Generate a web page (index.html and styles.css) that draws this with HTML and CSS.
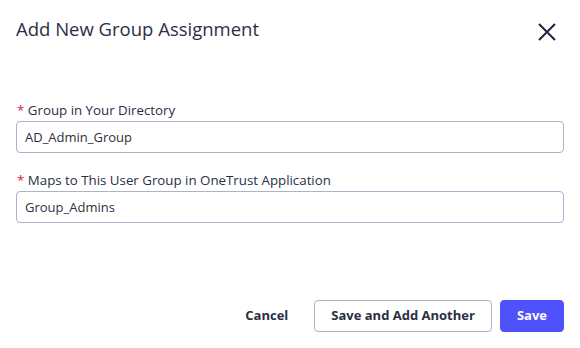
FILE: index.html
```html
<!DOCTYPE html>
<html lang="en">
<head>
<meta charset="utf-8">
<title>Add New Group Assignment</title>
<link rel="stylesheet" href="styles.css">
</head>
<body>
<div class="dialog">
  <header class="dialog-header">
    <h1 class="dialog-title">Add New Group Assignment</h1>
    <button class="close-btn" aria-label="Close">
      <svg width="18" height="18" viewBox="0 0 18 18"><path d="M1 1L17 17M17 1L1 17" stroke="#1f2540" stroke-width="2" fill="none" stroke-linecap="butt"/></svg>
    </button>
  </header>
  <div class="dialog-body">
    <div class="field">
      <label class="field-label"><span class="req">*</span> Group in Your Directory</label>
      <input class="field-input" type="text" value="AD_Admin_Group">
    </div>
    <div class="field">
      <label class="field-label"><span class="req">*</span> Maps to This User Group in OneTrust Application</label>
      <input class="field-input" type="text" value="Group_Admins">
    </div>
  </div>
  <footer class="dialog-footer">
    <button class="btn btn-link">Cancel</button>
    <button class="btn btn-outline">Save and Add Another</button>
    <button class="btn btn-primary">Save</button>
  </footer>
</div>
</body>
</html>
```
FILE: styles.css
```css
* { box-sizing: border-box; }
html, body {
  margin: 0;
  background: #ffffff;
  font-family: "Open Sans", "Noto Sans", sans-serif;
  color: #2b2f45;
}
.dialog {
  width: 580px;
  height: 348px;
  padding: 17px 16px 0 16px;
  display: flex;
  flex-direction: column;
}
.dialog-header {
  display: flex;
  align-items: flex-start;
  justify-content: space-between;
  height: 24px;
}
.dialog-title {
  margin: 0;
  font-size: 18.5px;
  line-height: 24px;
  font-weight: 400;
  color: #2b2f45;
}
.close-btn {
  border: 0;
  background: none;
  padding: 0;
  margin: 6px 8px 0 0;
  width: 18px;
  height: 18px;
  display: block;
}
.close-btn svg { display: block; }
.dialog-body {
  margin-top: 60px;
  display: flex;
  flex-direction: column;
  gap: 18px;
}
.field {
  display: flex;
  flex-direction: column;
  gap: 2px;
}
.field-label {
  font-size: 13.3px;
  line-height: 18px;
  color: #2b2f45;
  padding-left: 1px;
}
.req { color: #d1204a; }
.field-input {
  height: 32px;
  width: 100%;
  border: 1px solid #aab3cc;
  border-radius: 4px;
  padding: 0 8px;
  font-family: "Open Sans", "Noto Sans", sans-serif;
  font-size: 13px;
  color: #2f3140;
  background: #fff;
  outline: none;
}
.dialog-footer {
  margin-top: 77px;
  display: flex;
  justify-content: flex-end;
  gap: 8px;
}
.btn {
  height: 32px;
  border-radius: 4px;
  font-family: "Open Sans", "Noto Sans", sans-serif;
  font-size: 13px;
  font-weight: 700;
  line-height: 18px;
  padding: 0 16px 2px;
  cursor: pointer;
}
.btn-link {
  border: 1px solid transparent;
  background: none;
  color: #2b2f45;
  margin-right: 1px;
}
.btn-outline {
  border: 1px solid #aab3cc;
  background: #fff;
  color: #2b2f45;
}
.btn-primary {
  border: 1px solid #4f51fa;
  background: #4f51fa;
  color: #fff;
}
```
